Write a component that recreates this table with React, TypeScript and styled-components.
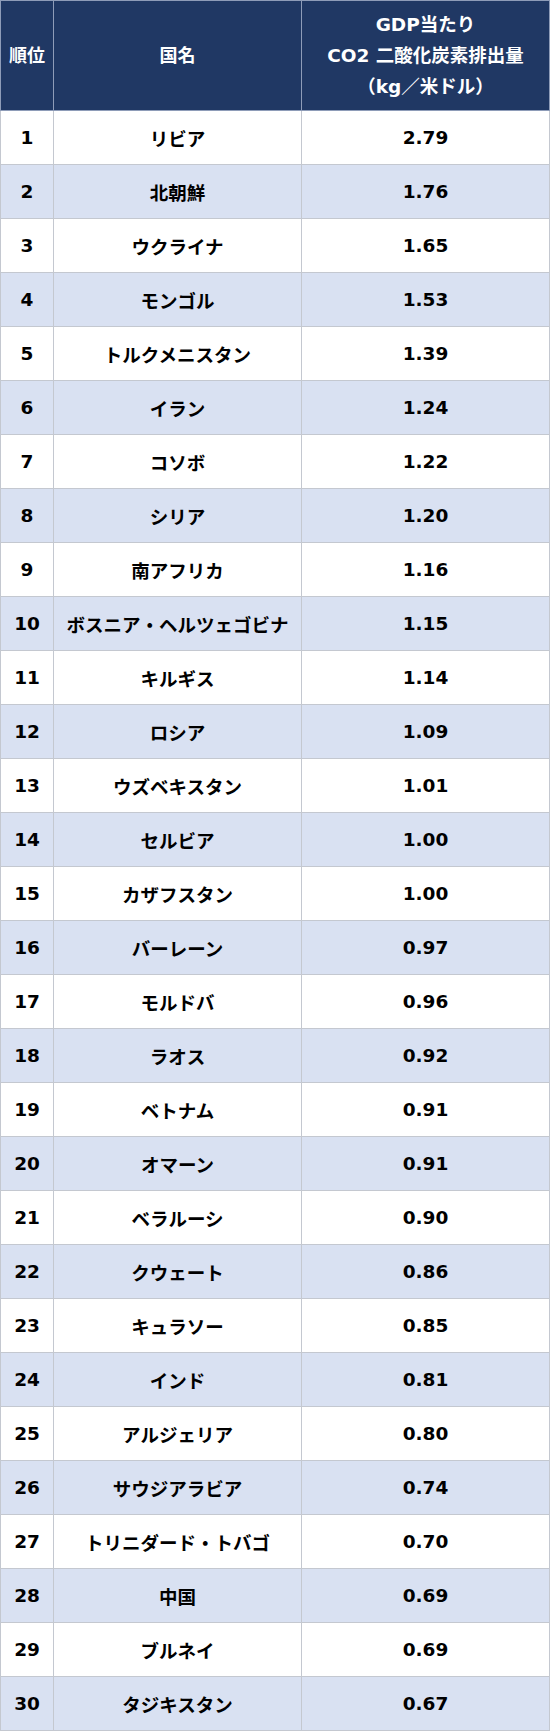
import React from 'react';
import styled, { createGlobalStyle } from 'styled-components';

const GlobalStyle = createGlobalStyle`
  html, body {
    margin: 0;
    padding: 0;
    background: #fff;
  }
  body {
    font-family: "DejaVu Sans", "Noto Sans CJK JP", sans-serif;
    color: #000;
  }
`;

const Table = styled.table`
  width: 549px;
  border-collapse: collapse;
  table-layout: fixed;
  font-family: "DejaVu Sans", "Noto Sans CJK JP", sans-serif;
  font-weight: 700;
`;

const HeadCell = styled.th<{ $w: number }>`
  width: ${p => p.$w}px;
  height: 110px;
  padding: 0;
  background: #203864;
  color: #fff;
  font-size: 18px;
  font-weight: 700;
  line-height: 31px;
  text-align: center;
  vertical-align: middle;
  border: 1px solid #8e9cb8;
  box-sizing: border-box;
  white-space: nowrap;
`;

const HeadLine = styled.div`
  font-size: 18.5px;
`;

const Row = styled.tr<{ $alt: boolean }>`
  background: ${p => (p.$alt ? '#d9e1f2' : '#ffffff')};
`;

const Cell = styled.td`
  height: 54px;
  padding: 0;
  font-size: 18.5px;
  text-align: center;
  vertical-align: middle;
  border: 1px solid #c4c8d0;
  box-sizing: border-box;
  white-space: nowrap;
`;

const rows: [string, string][] = [
  ['リビア', '2.79'],
  ['北朝鮮', '1.76'],
  ['ウクライナ', '1.65'],
  ['モンゴル', '1.53'],
  ['トルクメニスタン', '1.39'],
  ['イラン', '1.24'],
  ['コソボ', '1.22'],
  ['シリア', '1.20'],
  ['南アフリカ', '1.16'],
  ['ボスニア・ヘルツェゴビナ', '1.15'],
  ['キルギス', '1.14'],
  ['ロシア', '1.09'],
  ['ウズベキスタン', '1.01'],
  ['セルビア', '1.00'],
  ['カザフスタン', '1.00'],
  ['バーレーン', '0.97'],
  ['モルドバ', '0.96'],
  ['ラオス', '0.92'],
  ['ベトナム', '0.91'],
  ['オマーン', '0.91'],
  ['ベラルーシ', '0.90'],
  ['クウェート', '0.86'],
  ['キュラソー', '0.85'],
  ['インド', '0.81'],
  ['アルジェリア', '0.80'],
  ['サウジアラビア', '0.74'],
  ['トリニダード・トバゴ', '0.70'],
  ['中国', '0.69'],
  ['ブルネイ', '0.69'],
  ['タジキスタン', '0.67'],
];

const App: React.FC = () => (
  <>
    <GlobalStyle />
    <Table>
      <thead>
        <tr>
          <HeadCell $w={53}>順位</HeadCell>
          <HeadCell $w={248}>国名</HeadCell>
          <HeadCell $w={248}>
            <HeadLine>GDP当たり</HeadLine>
            <HeadLine>CO2 二酸化炭素排出量</HeadLine>
            <HeadLine>（kg／米ドル）</HeadLine>
          </HeadCell>
        </tr>
      </thead>
      <tbody>
        {rows.map(([name, value], i) => (
          <Row key={i} $alt={i % 2 === 1}>
            <Cell>{i + 1}</Cell>
            <Cell>{name}</Cell>
            <Cell>{value}</Cell>
          </Row>
        ))}
      </tbody>
    </Table>
  </>
);

export default App;
